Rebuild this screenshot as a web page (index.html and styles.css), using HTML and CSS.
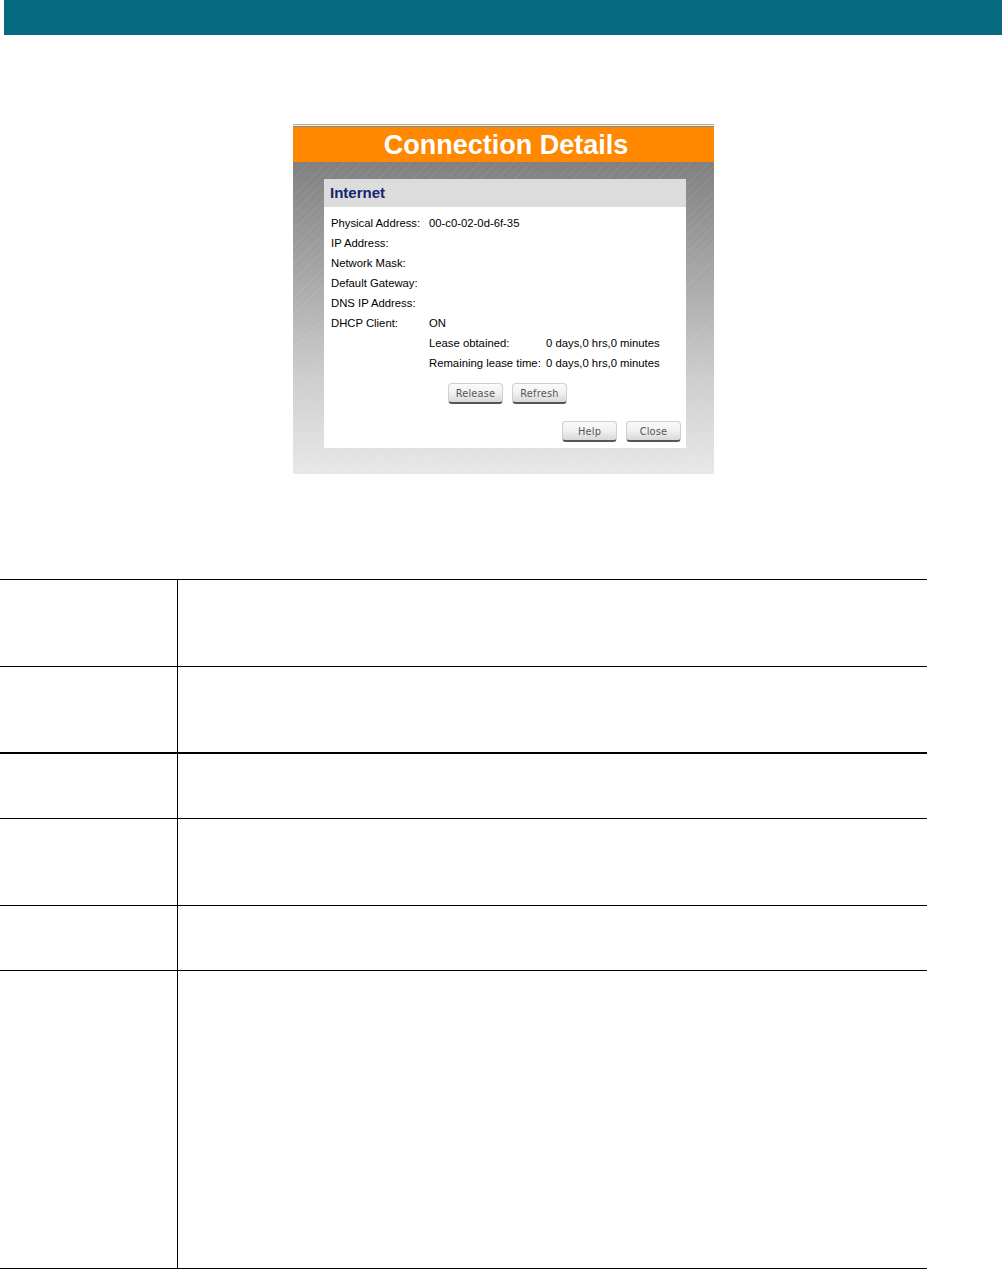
FILE: index.html
```html
<!DOCTYPE html>
<html lang="en">
<head>
<meta charset="utf-8">
<title>Connection Details</title>
<link rel="stylesheet" href="styles.css">
</head>
<body>
<header class="banner"></header>
<section class="shot">
  <div class="rule"></div>
  <h1 class="title">Connection Details</h1>
  <div class="panel">
    <div class="card">
      <h2 class="card-head">Internet</h2>
      <div class="details">
        <div class="row"><span class="label">Physical Address:</span><span>00-c0-02-0d-6f-35</span></div>
        <div class="row"><span class="label">IP Address:</span></div>
        <div class="row"><span class="label">Network Mask:</span></div>
        <div class="row"><span class="label">Default Gateway:</span></div>
        <div class="row"><span class="label">DNS IP Address:</span></div>
        <div class="row"><span class="label">DHCP Client:</span><span>ON</span></div>
        <div class="row"><span class="label"></span><span class="sublabel">Lease obtained:</span><span>0 days,0 hrs,0 minutes</span></div>
        <div class="row"><span class="label"></span><span class="sublabel">Remaining lease time:</span><span>0 days,0 hrs,0 minutes</span></div>
      </div>
      <div class="actions actions-lease">
        <button class="btn" type="button">Release</button>
        <button class="btn" type="button">Refresh</button>
      </div>
      <div class="actions actions-foot">
        <button class="btn" type="button">Help</button>
        <button class="btn" type="button">Close</button>
      </div>
    </div>
  </div>
</section>
<section class="table">
  <div class="tr tr-tall"><div class="th"></div><div class="td"></div></div>
  <div class="tr tr-tall tr-heavy"><div class="th"></div><div class="td"></div></div>
  <div class="tr tr-short"><div class="th"></div><div class="td"></div></div>
  <div class="tr tr-tall"><div class="th"></div><div class="td"></div></div>
  <div class="tr tr-short"><div class="th"></div><div class="td"></div></div>
  <div class="tr tr-last"><div class="th"></div><div class="td"></div></div>
</section>
</body>
</html>
```
FILE: styles.css
```css
* { box-sizing: border-box; }
html, body { margin: 0; padding: 0; background: #fff; }
body { height: 1269px; overflow: hidden; font-family: "Liberation Sans", Arial, sans-serif; color: #000; }

.banner { height: 35px; margin-left: 4px; background: #066a80; }

.shot { width: 421px; height: 350px; margin: 89px 0 0 293px; display: flex; flex-direction: column; }
.rule { height: 3px; flex: none; background: linear-gradient(#b4b0a4 0, #b4b0a4 33%, #efefec 33%, #efefec 66%, #8a8a82 66%); }
.title { margin: 0; height: 35px; flex: none; background: #ff8800; color: #fff; font-size: 27px; font-weight: 700; line-height: 36px; text-align: center; padding-left: 5px; }

.panel {
  flex: 1;
  padding: 17px 28px 25px 31px;
  background:
    repeating-linear-gradient(135deg, rgba(255,255,255,0.06) 0 1px, rgba(255,255,255,0) 1px 6px),
    linear-gradient(#808080 0, #a6a6a6 35%, #cecece 70%, #e8e8e8 100%);
}
.card { height: 269px; background: #fff; display: flex; flex-direction: column; }
.card-head { margin: 0; height: 28px; flex: none; padding-left: 6px; background: #dcdcdc; color: #14246e; font-size: 15px; font-weight: 700; line-height: 28px; }

.details { padding: 6px 0 0 7px; font-size: 11.3px; color: #000; }
.row { height: 20px; line-height: 20px; display: flex; white-space: nowrap; }
.label { width: 98px; flex: none; }
.sublabel { width: 117px; flex: none; }

.actions { display: flex; gap: 9px; }
.actions-lease { margin: 10px 0 0 124px; }
.actions-foot { margin: 17px 0 0 238px; }
.btn {
  width: 55px; height: 21px; padding: 2px 0 0;
  border: 1px solid #cfcfcf; border-bottom: 2px solid #555; border-radius: 4px;
  background: linear-gradient(#fbfbfb, #f0f0f0 50%, #d8d8d8);
  font-family: "DejaVu Sans", sans-serif; font-size: 9.8px; letter-spacing: 0.2px; font-weight: 400; color: #555; line-height: 16px;
}

.table { margin-top: 105px; width: 927px; border-top: 1px solid #000; }
.tr { display: flex; border-bottom: 1px solid #000; }
.th { width: 178px; flex: none; border-right: 1px solid #000; }
.td { flex: 1; }
.tr-tall { height: 87px; }
.tr-heavy { border-bottom-width: 2px; }
.tr-short { height: 65px; }
.tr-last { height: 298px; }
```
